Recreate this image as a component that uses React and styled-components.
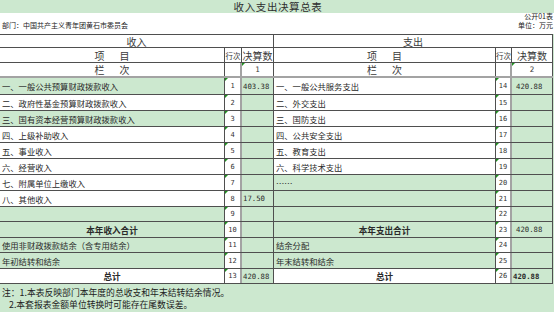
import styled, { createGlobalStyle } from "styled-components"

const GREEN = "#cce8cf"
const LINE = "#4f4f4f"
const SOFT = "#a3a3a3"
const CJK = `"Noto Sans CJK SC", "Noto Sans", sans-serif`
const NUM = `"DejaVu Sans Mono", "Liberation Mono", monospace`

const GlobalStyle = createGlobalStyle`
    body {
        margin: 0;
        background: #fff;
        font-family: ${CJK};
        color: #333;
    }
`

const Page = styled.div`
    width: 554px;
    height: 312px;
    overflow: hidden;
    display: flex;
    flex-direction: column;
    background: ${GREEN};
`

const Title = styled.div`
    height: 13px;
    flex: none;
    background: ${GREEN};
    text-align: center;
    font-size: 10.5px;
    line-height: 14px;
    color: #2e2e2e;
    padding-left: 2px;
    letter-spacing: 0.6px;
`

const Meta = styled.div`
    height: 21px;
    flex: none;
    background: #fff;
    display: flex;
    justify-content: space-between;
    padding: 0 1px 0 2px;
    font-size: 7px;
    color: #222;
`

const Dept = styled.div`
    margin-top: 7.5px;
    line-height: 9px;
`

const Stamp = styled.div`
    text-align: right;
    line-height: 9.5px;
    margin-top: -1.5px;
`

const Table = styled.div`
    flex: none;
    width: 553px;
    display: flex;
    flex-direction: column;
    border-top: 1px solid ${LINE};
    box-sizing: border-box;
    background: #fff;
`

const Row = styled.div`
    display: grid;
    grid-template-columns: 225px 17px 32px 222px 16px 41px;
    height: ${p => p.$h}px;
    box-sizing: border-box;
    border-bottom: ${p => (p.$thick ? `2px solid ${SOFT}` : `1px solid ${LINE}`)};
`

const Cell = styled.div`
    position: relative;
    box-sizing: border-box;
    display: flex;
    align-items: center;
    overflow: hidden;
    white-space: nowrap;
    background: ${p => (p.$green ? GREEN : "#fff")};
    border-right: ${p => (p.$soft ? `2px solid ${SOFT}` : `1px solid ${LINE}`)};

    ${p => p.$tick && `
        &::before {
            content: "";
            position: absolute;
            top: 0;
            left: 0;
            border-top: 3px solid #1f8f1f;
            border-right: 3px solid transparent;
        }
    `}
`

const HeadCell = styled(Cell)`
    grid-column: span ${p => p.$span || 1};
    justify-content: center;
    font-size: ${p => p.$small ? 7.5 : 10}px;
    color: #3a3a3a;
    gap: 15px;
`

const HeadNum = styled(HeadCell)`
    font-family: ${NUM};
    font-size: 7.5px;
`

const ItemCell = styled(Cell)`
    justify-content: ${p => (p.$bold ? "center" : "flex-start")};
    padding-left: ${p => (p.$bold ? 0 : 2)}px;
    font-size: ${p => (p.$bold ? 8.6 : 8.3)}px;
    font-weight: ${p => (p.$bold ? 700 : 400)};
    color: #2a2a2a;
`

const NoCell = styled(Cell)`
    justify-content: center;
    font-family: ${NUM};
    font-size: 7px;
    color: #333;
`

const ValueCell = styled(Cell)`
    padding-left: ${p => p.$pad}px;
    font-family: ${NUM};
    font-size: 7.3px;
    font-weight: ${p => (p.$bold ? 700 : 400)};
    color: #2a2a2a;
`

const Notes = styled.div`
    padding: 3px 0 0 2px;
    font-size: 8.8px;
    line-height: 11.5px;
    color: #222;
`

const NoteLine = styled.div`
    padding-left: ${p => p.$indent || 0}px;
    white-space: nowrap;
`

const rows = [
    { h: 17, l: "一、一般公共预算财政拨款收入", lg: true, ln: 1, lv: "403.38", r: "一、一般公共服务支出", rn: 14, rv: "420.88" },
    { h: 16, l: "二、政府性基金预算财政拨款收入", ln: 2, r: "二、外交支出", rn: 15 },
    { h: 16, l: "三、国有资本经营预算财政拨款收入", lg: true, ln: 3, r: "三、国防支出", rn: 16 },
    { h: 16, l: "四、上级补助收入", ln: 4, r: "四、公共安全支出", rn: 17 },
    { h: 16, l: "五、事业收入", ln: 5, r: "五、教育支出", rn: 18 },
    { h: 16, l: "六、经营收入", ln: 6, r: "六、科学技术支出", rn: 19 },
    { h: 16, l: "七、附属单位上缴收入", ln: 7, r: "……", rg: true, rn: 20 },
    { h: 16, l: "八、其他收入", ln: 8, lv: "17.50", r: "", rg: true, rn: 21 },
    { h: 15, l: "", lg: true, ln: 9, r: "", rg: true, rn: 22 },
    { h: 16, l: "本年收入合计", lg: true, bold: true, ln: 10, r: "本年支出合计", rg: true, rn: 23, rv: "420.88" },
    { h: 15, l: "使用非财政拨款结余（含专用结余）", lg: true, ln: 11, r: "结余分配", rg: true, rn: 24 },
    { h: 16, l: "年初结转和结余", lg: true, ln: 12, r: "年末结转和结余", rg: true, rn: 25 },
    { h: 15, l: "总计", bold: true, ln: 13, lv: "420.88", r: "总计", rn: 26, rv: "420.88", total: true },
]

export default function App() {
    return (
        <Page>
            <GlobalStyle />
            <Title>收入支出决算总表</Title>
            <Meta>
                <Dept>部门：中国共产主义青年团黄石市委员会</Dept>
                <Stamp>
                    <div>公开01表</div>
                    <div>单位：万元</div>
                </Stamp>
            </Meta>
            <Table>
                <Row $h={13}>
                    <HeadCell $span={3}>收入</HeadCell>
                    <HeadCell $span={3}>支出</HeadCell>
                </Row>
                <Row $h={15}>
                    <HeadCell><span>项</span><span>目</span></HeadCell>
                    <HeadCell $small>行次</HeadCell>
                    <HeadCell>决算数</HeadCell>
                    <HeadCell><span>项</span><span>目</span></HeadCell>
                    <HeadCell $small>行次</HeadCell>
                    <HeadCell>决算数</HeadCell>
                </Row>
                <Row $h={15} $thick>
                    <HeadCell><span>栏</span><span>次</span></HeadCell>
                    <HeadCell $soft />
                    <HeadNum $tick>1</HeadNum>
                    <HeadCell><span>栏</span><span>次</span></HeadCell>
                    <HeadCell $soft />
                    <HeadNum $tick>2</HeadNum>
                </Row>
                {rows.map(row => (
                    <Row key={row.ln} $h={row.h}>
                        <ItemCell $green={row.lg} $bold={row.bold}>{row.l}</ItemCell>
                        <NoCell $soft $tick>{row.ln}</NoCell>
                        <ValueCell $green $pad={1}>{row.lv}</ValueCell>
                        <ItemCell $green={row.rg} $bold={row.bold}>{row.r}</ItemCell>
                        <NoCell $soft $tick>{row.rn}</NoCell>
                        <ValueCell $green $pad={row.total ? 1 : 4} $bold={row.total}>{row.rv}</ValueCell>
                    </Row>
                ))}
            </Table>
            <Notes>
                <NoteLine>注：1.本表反映部门本年度的总收支和年末结转结余情况。</NoteLine>
                <NoteLine $indent={7}>2.本套报表金额单位转换时可能存在尾数误差。</NoteLine>
            </Notes>
        </Page>
    )
}
